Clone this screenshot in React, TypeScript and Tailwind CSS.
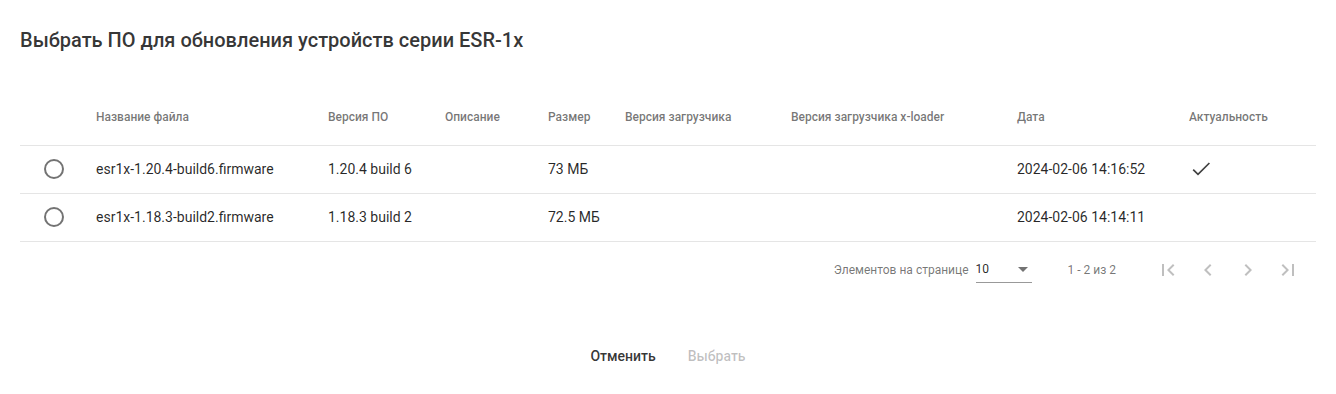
import { ReactNode } from 'react';

const columns = [
  { title: '', width: 'w-[76px]' },
  { title: 'Название файла', width: 'w-[232px]' },
  { title: 'Версия ПО', width: 'w-[117px]' },
  { title: 'Описание', width: 'w-[103px]' },
  { title: 'Размер', width: 'w-[77px]' },
  { title: 'Версия загрузчика', width: 'w-[166px]' },
  { title: 'Версия загрузчика x-loader', width: 'w-[226px]' },
  { title: 'Дата', width: 'w-[172px]' },
  { title: 'Актуальность', width: 'w-[127px]' },
];

const rows = [
  {
    file: 'esr1x-1.20.4-build6.firmware',
    version: '1.20.4 build 6',
    size: '73 МБ',
    date: '2024-02-06 14:16:52',
    actual: true,
  },
  {
    file: 'esr1x-1.18.3-build2.firmware',
    version: '1.18.3 build 2',
    size: '72.5 МБ',
    date: '2024-02-06 14:14:11',
    actual: false,
  },
];

function Icon({ d, className }: { d: string; className?: string }) {
  return (
    <svg viewBox="0 0 24 24" className={className} fill="currentColor">
      <path d={d} />
    </svg>
  );
}

function PagerButton({ children }: { children: ReactNode }) {
  return (
    <button disabled className="w-10 h-10 flex items-center justify-center text-black/25">
      {children}
    </button>
  );
}

export default function App() {
  return (
    <div className="px-5 pt-6 bg-white min-h-[394px] font-['Roboto',sans-serif] text-black/85">
      {/* Title */}
      <h2 className="text-[20px] leading-8 font-medium text-black/80">
        Выбрать ПО для обновления устройств серии ESR-1x
      </h2>

      {/* Table */}
      <table className="mt-[33px] w-full table-fixed border-collapse">
        <colgroup>
          {columns.map((c, i) => (
            <col key={i} className={c.width} />
          ))}
        </colgroup>
        <thead>
          <tr className="h-14 border-b border-black/10">
            {columns.map((c, i) => (
              <th
                key={i}
                className="text-left text-[12px] font-medium text-black/55 p-0 whitespace-nowrap"
              >
                {c.title}
              </th>
            ))}
          </tr>
        </thead>
        <tbody>
          {rows.map((r) => (
            <tr key={r.file} className="h-12 border-b border-black/10 text-[14px]">
              <td className="pl-6">
                <span className="block w-5 h-5 rounded-full border-2 border-black/55" />
              </td>
              <td>{r.file}</td>
              <td>{r.version}</td>
              <td></td>
              <td>{r.size}</td>
              <td></td>
              <td></td>
              <td>{r.date}</td>
              <td>
                {r.actual && (
                  <svg viewBox="0 0 24 24" className="w-6 h-6 text-black/75" fill="none">
                    <path
                      d="M4.2 12.6L9 17.4 20.4 6"
                      stroke="currentColor"
                      strokeWidth="1.7"
                    />
                  </svg>
                )}
              </td>
            </tr>
          ))}
        </tbody>
      </table>

      {/* Paginator */}
      <div className="h-14 flex items-center justify-end pr-2 text-[12px] text-black/55">
        <span>Элементов на странице</span>
        <div className="ml-[7px] w-14 h-[26px] flex items-center justify-between border-b border-black/40 text-black/85">
          <span>10</span>
          <span className="mr-[4px] w-0 h-0 border-l-[5px] border-r-[5px] border-t-[5px] border-l-transparent border-r-transparent border-t-black/55" />
        </div>
        <span className="ml-9 mr-8">1 - 2 из 2</span>
        <PagerButton>
          <Icon d="M18.41 16.59L13.82 12l4.59-4.59L17 6l-6 6 6 6zM6 6h2v12H6z" className="w-6 h-6" />
        </PagerButton>
        <PagerButton>
          <Icon d="M15.41 7.41L14 6l-6 6 6 6 1.41-1.41L10.83 12z" className="w-6 h-6" />
        </PagerButton>
        <PagerButton>
          <Icon d="M10 6L8.59 7.41 13.17 12l-4.58 4.59L10 18l6-6z" className="w-6 h-6" />
        </PagerButton>
        <PagerButton>
          <Icon d="M5.59 7.41L10.18 12l-4.59 4.59L7 18l6-6-6-6zM16 6h2v12h-2z" className="w-6 h-6" />
        </PagerButton>
      </div>

      {/* Actions */}
      <div className="mt-[41px] flex justify-center text-[14px] font-medium">
        <button className="h-9 px-4 min-w-16 text-black/80">Отменить</button>
        <button disabled className="h-9 px-4 min-w-16 text-black/25">
          Выбрать
        </button>
      </div>
    </div>
  );
}
